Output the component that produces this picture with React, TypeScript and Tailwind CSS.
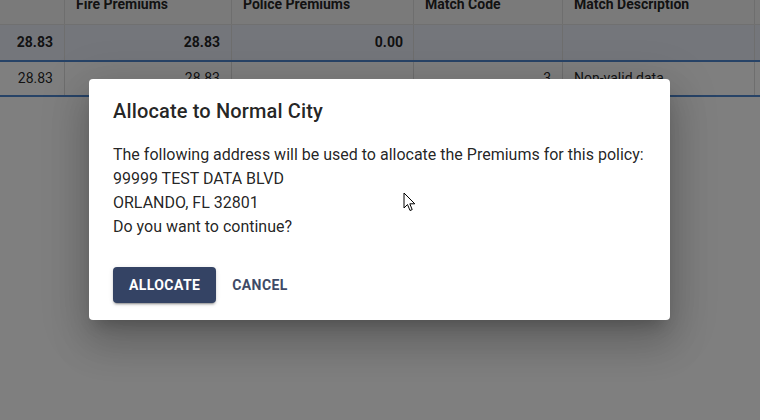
import React from "react";

const cols = [
  { w: "w-[65px]", label: "" },
  { w: "w-[167px]", label: "Fire Premiums" },
  { w: "w-[182px]", label: "Police Premiums" },
  { w: "w-[149px]", label: "Match Code" },
  { w: "w-[192px]", label: "Match Description" },
  { w: "w-[40px]", label: "" },
];

export default function App() {
  const font = { fontFamily: "Roboto, 'Liberation Sans', sans-serif" };
  return (
    <div className="relative w-[760px] h-[420px] overflow-hidden bg-white" style={font}>
      {/* table */}
      <div className="-mt-[31px] text-[14px] text-[rgba(0,0,0,0.87)]">
        <div className="flex h-[56px] bg-[#f5f5f5] border-b border-[#e0e0e0]">
          {cols.map((c, i) => (
            <div key={i} className={`${c.w} shrink-0 border-r border-[#dcdcdc] px-[11px] pb-[10px] flex items-end font-bold leading-[20px]`}>
              {c.label}
            </div>
          ))}
        </div>
        <div className="flex h-[37px] bg-[#e9edf7] border-b-2 border-[#4f86cf] font-bold">
          <div className="w-[65px] shrink-0 border-r border-[#dcdcdc] px-[11px] flex items-center justify-end">28.83</div>
          <div className="w-[167px] shrink-0 border-r border-[#dcdcdc] px-[11px] flex items-center justify-end">28.83</div>
          <div className="w-[182px] shrink-0 border-r border-[#dcdcdc] px-[10px] flex items-center justify-end">0.00</div>
          <div className="w-[149px] shrink-0 border-r border-[#dcdcdc]"></div>
          <div className="w-[192px] shrink-0 border-r border-[#dcdcdc]"></div>
          <div className="w-[40px] shrink-0"></div>
        </div>
        <div className="flex h-[35px] bg-white border-b-2 border-[#4f86cf]">
          <div className="w-[65px] shrink-0 border-r border-[#dcdcdc] px-[11px] flex items-center justify-end">28.83</div>
          <div className="w-[167px] shrink-0 border-r border-[#dcdcdc] px-[11px] flex items-center justify-end">28.83</div>
          <div className="w-[182px] shrink-0 border-r border-[#dcdcdc]"></div>
          <div className="w-[149px] shrink-0 border-r border-[#dcdcdc] px-[11px] flex items-center justify-end">3</div>
          <div className="w-[192px] shrink-0 border-r border-[#dcdcdc] px-[11px] flex items-center">Non-valid data</div>
          <div className="w-[40px] shrink-0"></div>
        </div>
      </div>

      {/* backdrop + dialog */}
      <div className="absolute inset-0 bg-black/50 flex justify-start items-start pt-[79px] pl-[89px]">
        <div className="w-[581px] bg-white rounded-[4px] shadow-[0_11px_15px_-7px_rgba(0,0,0,0.2),0_24px_38px_3px_rgba(0,0,0,0.14),0_9px_46px_8px_rgba(0,0,0,0.12)]">
          <h2 className="px-6 pt-4 text-[20px] leading-[32px] font-medium tracking-[0.15px] text-[rgba(0,0,0,0.87)]">
            Allocate to Normal City
          </h2>
          <div className="px-6 pt-4 text-[16px] leading-[24px] text-[rgba(0,0,0,0.87)] whitespace-nowrap">
            <div>The following address will be used to allocate the Premiums for this policy:</div>
            <div>99999 TEST DATA BLVD</div>
            <div>ORLANDO, FL 32801</div>
            <div>Do you want to continue?</div>
          </div>
          <div className="flex items-center gap-2 px-6 pt-[28px] pb-[17px]">
            <button className="h-[36px] px-4 rounded-[4px] bg-[#344364] text-white text-[14px] font-bold tracking-[0.4px] uppercase shadow-[0_3px_1px_-2px_rgba(0,0,0,0.2),0_2px_2px_0_rgba(0,0,0,0.14),0_1px_5px_0_rgba(0,0,0,0.12)]">
              Allocate
            </button>
            <button className="h-[36px] px-2 rounded-[4px] text-[#3e4a66] text-[14px] font-bold tracking-[0.4px] uppercase">
              Cancel
            </button>
          </div>
        </div>
      </div>

      {/* mouse cursor */}
      <svg className="absolute left-[403px] top-[192px]" width="14" height="21" viewBox="0 0 14 21">
        <path d="M1 1 L1 16 L4.5 12.5 L7 18.5 L9.2 17.6 L6.8 11.8 L11.8 11.8 Z" fill="white" stroke="black" strokeWidth="1" strokeLinejoin="round" />
      </svg>
    </div>
  );
}
